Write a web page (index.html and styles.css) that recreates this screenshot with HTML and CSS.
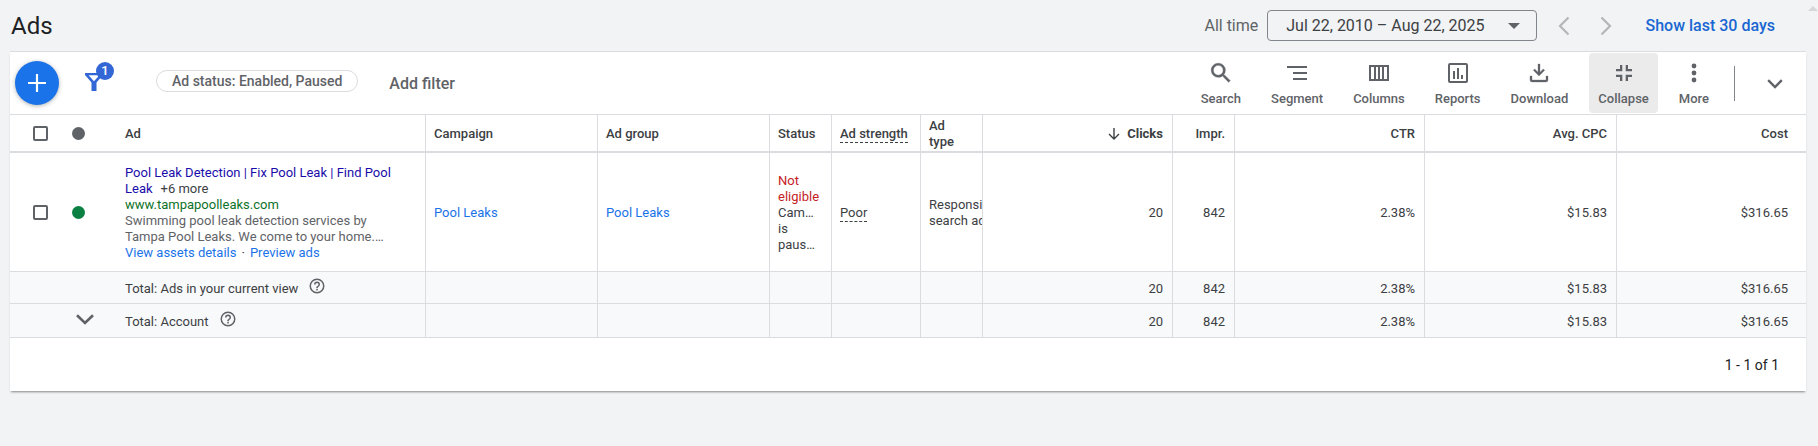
FILE: index.html
```
<!DOCTYPE html>
<html lang="en">
<head>
<meta charset="utf-8">
<meta name="viewport" content="width=device-width, initial-scale=1">
<title>Ads</title>
<link rel="stylesheet" href="styles.css">
</head>
<body>
<header class="topbar">
  <h1 class="title">Ads</h1>
  <div class="range">
    <span class="range-label" id="range-label">All time</span>
    <button class="date-picker" type="button" aria-describedby="range-label">
      <span>Jul 22, 2010 – Aug 22, 2025</span>
      <svg width="12" height="6" viewBox="0 0 12 6"><path d="M0 0h12L6 6z" fill="currentColor"/></svg>
    </button>
    <button class="step" type="button" aria-label="Previous period"><svg width="12" height="20" viewBox="0 0 12 20"><path d="M10.500 1.500L2 10l8.500 8.500" fill="none" stroke="currentColor" stroke-width="2.200"/></svg></button>
    <button class="step" type="button" aria-label="Next period"><svg width="12" height="20" viewBox="0 0 12 20"><path d="M1.500 1.500L10 10l-8.500 8.500" fill="none" stroke="currentColor" stroke-width="2.200"/></svg></button>
    <a class="last-days" href="#">Show last 30 days</a>
  </div>
  <svg class="scroll-up" width="10" height="5" viewBox="0 0 10 5"><path d="M5 0l5 5H0z" fill="currentColor"/></svg>
</header>
<main class="card">
  <div class="toolbar">
    <button class="fab" type="button" aria-label="Create ad"><svg width="20" height="20" viewBox="0 0 20 20"><path d="M10 1v18M1 10h18" stroke="currentColor" stroke-width="2.200"/></svg></button>
    <button class="filter" type="button" aria-label="Filters">
      <svg width="18" height="18" viewBox="0 0 18 18"><path d="M0 0h18v2l-6.500 7.500V18h-5V9.500L0 2zM3.600 2.200L9 8.200l5.400-6z" fill="currentColor" fill-rule="evenodd"/></svg>
      <span class="badge">1</span>
    </button>
    <button class="chip" type="button">Ad status: Enabled, Paused</button>
    <button class="add-filter" type="button">Add filter</button>
    <div class="tools">
      <button class="tool" type="button"><svg viewBox="1 1 22 22"><path d="M15.500 14h-.790l-.280-.270A6.470 6.470 0 0 0 16 9.500 6.500 6.500 0 1 0 9.500 16c1.610 0 3.090-.590 4.230-1.570l.270.280v.790l5 4.990L20.490 19zm-6 0a4.500 4.500 0 1 1 0-9 4.500 4.500 0 0 1 0 9z" stroke="currentColor" stroke-width=".4"/></svg>Search</button>
      <button class="tool" type="button"><svg viewBox="0 0 24 24"><path d="M2 5h20v2H2zM8 11h14v2H8zM8 17h14v2H8z"/></svg>Segment</button>
      <button class="tool" type="button"><svg viewBox="0 0 24 24"><path d="M2 4h20v16H2zM4 6v12h3V6zM9 6v12h2V6zM13 6v12h2V6zM17 6v12h3V6z" fill-rule="evenodd"/></svg>Columns</button>
      <button class="tool" type="button"><svg viewBox="0 0 24 24"><path d="M4 2h16a2 2 0 0 1 2 2v16a2 2 0 0 1-2 2H4a2 2 0 0 1-2-2V4a2 2 0 0 1 2-2zM4 4v16h16V4zM7 10h2v8H7zM11 7h2v11h-2zM15 14h2v4h-2z" fill-rule="evenodd"/></svg>Reports</button>
      <button class="tool" type="button"><svg viewBox="0 0 24 24"><path d="M13 3v8.200l3.300-3.300 1.400 1.400L12 15 6.300 9.300l1.400-1.400 3.300 3.300V3zM3 15h2v4h14v-4h2v4a2 2 0 0 1-2 2H5a2 2 0 0 1-2-2z" stroke="currentColor" stroke-width=".3"/></svg>Download</button>
      <button class="tool tool-active" type="button"><svg viewBox="0 0 24 24"><path d="M8 4h2.300v6.300H4V8h4zM13.700 4H16v4h4v2.300h-6.300zM4 13.700h6.300V20H8v-4H4zM13.700 13.700H20V16h-4v4h-2.300z"/></svg>Collapse</button>
      <button class="tool" type="button"><svg viewBox="0 0 24 24"><circle cx="12" cy="5" r="2.400"/><circle cx="12" cy="12" r="2.400"/><circle cx="12" cy="19" r="2.400"/></svg>More</button>
      <span class="divider"></span>
      <button class="expand" type="button" aria-label="Hide toolbar"><svg width="16" height="10" viewBox="0 0 16 10"><path d="M1.200 1.200L8 8l6.800-6.800" fill="none" stroke="currentColor" stroke-width="2.400"/></svg></button>
    </div>
  </div>
  <table class="grid">
    <colgroup>
      <col class="c-check"><col class="c-dot"><col class="c-ad"><col class="c-campaign"><col class="c-group"><col class="c-status"><col class="c-strength"><col class="c-type"><col class="c-clicks"><col class="c-impr"><col class="c-ctr"><col class="c-cpc"><col class="c-cost">
    </colgroup>
    <thead>
      <tr>
        <th class="bare mark"><input class="box" type="checkbox" aria-label="Select all ads"></th>
        <th class="bare mark"><span class="dot"></span></th>
        <th>Ad</th><th>Campaign</th><th>Ad group</th><th>Status</th>
        <th><span class="hint">Ad strength</span></th>
        <th class="type">Ad type</th>
        <th class="num sorted"><svg width="12" height="12" viewBox="0 0 12 12"><path d="M6 0v11M1 6l5 5 5-5" fill="none" stroke="currentColor" stroke-width="1.400"/></svg>Clicks</th>
        <th class="num">Impr.</th><th class="num">CTR</th><th class="num">Avg. CPC</th><th class="num last">Cost</th>
      </tr>
    </thead>
    <tbody>
      <tr class="ad-row">
        <td class="bare mark"><input class="box" type="checkbox" aria-label="Select ad"></td>
        <td class="bare mark"><span class="dot dot-on"></span></td>
        <td>
          <div class="ad">
            <div><a class="headline" href="#">Pool Leak Detection | Fix Pool Leak | Find Pool Leak</a><span class="more">+6 more</span></div>
            <a class="url" href="#">www.tampapoolleaks.com</a>
            <div class="desc">Swimming pool leak detection services by Tampa Pool Leaks. We come to your home.…</div>
            <div class="actions"><a href="#">View assets details</a><span class="sep">·</span><a href="#">Preview ads</a></div>
          </div>
        </td>
        <td><a href="#">Pool Leaks</a></td>
        <td><a href="#">Pool Leaks</a></td>
        <td class="status"><div class="bad">Not eligible</div><div>Cam…</div><div>is</div><div>paus…</div></td>
        <td><span class="hint">Poor</span></td>
        <td class="clip">Responsive<br>search ad</td>
        <td class="num">20</td><td class="num">842</td><td class="num">2.38%</td><td class="num">$15.83</td><td class="num last">$316.65</td>
      </tr>
      <tr class="total">
        <td class="bare"></td><td class="bare"></td>
        <td><div class="total-label">Total: Ads in your current view <button class="help" type="button" aria-label="Help"><svg viewBox="0 0 24 24"><path d="M11 18h2v-2h-2zM12 2a10 10 0 1 0 0 20 10 10 0 0 0 0-20zm0 18a8 8 0 1 1 0-16 8 8 0 0 1 0 16zm0-14a4 4 0 0 0-4 4h2a2 2 0 1 1 4 0c0 2-3 1.750-3 5h2c0-2.250 3-2.500 3-5a4 4 0 0 0-4-4z"/></svg></button></div></td>
        <td></td><td></td><td></td><td></td><td></td>
        <td class="num">20</td><td class="num">842</td><td class="num">2.38%</td><td class="num">$15.83</td><td class="num last">$316.65</td>
      </tr>
      <tr class="total total-account">
        <td class="bare"></td>
        <td class="bare"><button class="open" type="button" aria-label="Expand account totals"><svg width="18" height="11" viewBox="0 0 18 11"><path d="M1 1.200L9 9l8-7.800" fill="none" stroke="currentColor" stroke-width="2.600"/></svg></button></td>
        <td><div class="total-label">Total: Account <button class="help" type="button" aria-label="Help"><svg viewBox="0 0 24 24"><path d="M11 18h2v-2h-2zM12 2a10 10 0 1 0 0 20 10 10 0 0 0 0-20zm0 18a8 8 0 1 1 0-16 8 8 0 0 1 0 16zm0-14a4 4 0 0 0-4 4h2a2 2 0 1 1 4 0c0 2-3 1.750-3 5h2c0-2.250 3-2.500 3-5a4 4 0 0 0-4-4z"/></svg></button></div></td>
        <td></td><td></td><td></td><td></td><td></td>
        <td class="num">20</td><td class="num">842</td><td class="num">2.38%</td><td class="num">$15.83</td><td class="num last">$316.65</td>
      </tr>
    </tbody>
  </table>
  <footer class="pager">1 - 1 of 1</footer>
</main>
</body>
</html>
```
FILE: styles.css
```
* { box-sizing: border-box; }

body {
  min-height: 100vh;
  margin: 0;
  background: #f1f3f4;
  color: #3c4043;
  font: 13px/16px Roboto, "Liberation Sans", sans-serif;
}

button {
  margin: 0;
  padding: 0;
  border: 0;
  background: none;
  color: inherit;
  font: inherit;
  cursor: pointer;
}

a { color: #1a73e8; text-decoration: none; }
svg { display: block; flex: none; fill: currentColor; }

/* Page heading and date range */
.topbar {
  position: relative;
  display: flex;
  align-items: center;
  justify-content: space-between;
  height: 51px;
  padding: 0 43px 0 11px;
}
.title { margin: 0; color: #202124; font-size: 24px; font-weight: 400; line-height: 32px; }
.range { display: flex; align-items: center; font-size: 16px; line-height: 20px; color: #5f6368; }
.date-picker {
  display: flex;
  align-items: center;
  gap: 24px;
  height: 31px;
  margin: 0 15px 0 9px;
  padding: 0 16px 0 18px;
  border: 1px solid #80868b;
  border-radius: 4px;
  color: #3c4043;
}
.date-picker svg { color: #5f6368; }
.step { padding: 0 6px; margin-right: 18px; color: #b4b7ba; }
.last-days { margin-left: 9px; color: #1967d2; font-weight: 500; }
.scroll-up { position: absolute; top: 6px; right: 0; color: #d5d7d9; }

/* White card */
.card {
  margin: 0 12px 0 10px;
  border-top: 1px solid #dadce0;
  background: #fff;
  box-shadow: 0 2px 2px -1px rgba(60, 64, 67, .6);
}
.toolbar { display: flex; align-items: center; height: 62px; padding: 0 15px 0 5px; color: #5f6368; }
.fab {
  display: grid;
  place-items: center;
  width: 44px;
  height: 44px;
  border-radius: 50%;
  background: #1a73e8;
  color: #fff;
  box-shadow: 0 1px 4px rgba(60, 64, 67, .4);
}
.filter { position: relative; margin-left: 26px; padding-bottom: 2px; color: #3367d6; }
.badge {
  position: absolute;
  top: -11px;
  left: 11px;
  width: 18px;
  border-radius: 9px;
  background: #3367d6;
  color: #fff;
  font-weight: 500;
  line-height: 18px;
  text-align: center;
}
.chip {
  height: 22px;
  margin: 0 31px 4px 53px;
  padding: 0 15px;
  border: 1px solid #dadce0;
  border-radius: 11px;
  font-size: 14px;
  font-weight: 500;
}
.add-filter { padding-top: 2px; font-size: 16px; line-height: 20px; font-weight: 500; }

.tools { display: flex; align-items: center; gap: 12px; margin-left: auto; }
.tool {
  display: flex;
  flex-direction: column;
  align-items: center;
  gap: 6px;
  height: 60px;
  padding: 8px 9px 0;
  border-radius: 4px;
  font-weight: 500;
}
.tool svg { width: 24px; height: 24px; }
.tool-active { background: #ebebeb; }
.divider { width: 1px; height: 35px; margin: 0 12px 0 4px; background: #80868b; }
.expand { padding: 10px 8px 8px; }

/* Ads table */
.grid { width: 100%; table-layout: fixed; border-collapse: separate; border-spacing: 0; }
.c-check { width: 50px; }
.c-dot { width: 57px; }
.c-ad { width: 309px; }
.c-campaign, .c-group { width: 172px; }
.c-status, .c-type, .c-impr { width: 62px; }
.c-strength { width: 89px; }
.c-clicks, .c-ctr { width: 190px; }
.c-cpc { width: 192px; }
.c-cost { width: 189px; }

.grid th, .grid td {
  padding: 2px 8px 0;
  border-right: 1px solid #dadce0;
  border-bottom: 1px solid #dadce0;
  text-align: left;
  vertical-align: middle;
  font-weight: 400;
}
.grid th {
  height: 39px;
  border-top: 1px solid #dadce0;
  border-bottom-width: 2px;
  font-weight: 500;
}
.grid .bare, .grid .last { border-right: 0; }
.grid .num { padding-right: 9px; text-align: right; }
.grid .last { padding-right: 18px; }
.grid .type { padding-right: 24px; }
.grid .sorted { font-weight: 700; }
.sorted svg { display: inline-block; margin-right: 7px; vertical-align: -2px; }
.grid .mark { padding: 0 0 0 23px; }
.grid .mark + .mark { padding-left: 12px; }

.box {
  display: block;
  appearance: none;
  width: 15px;
  height: 15px;
  margin: 0;
  border: 2px solid #5f6368;
  border-radius: 2px;
}
.dot { display: block; width: 13px; height: 13px; border-radius: 50%; background: #5f6368; }
.dot-on { background: #0b8043; }
.hint { border-bottom: 1px dashed #3c4043; padding-bottom: 1px; }

.ad-row td { height: 119px; }
.ad { width: 280px; }
.headline { color: #1a0dab; }
.more { margin-left: 8px; }
.grid .url { color: #0d7228; }
.desc { color: #5f6368; }
.sep { margin: 0 5px; }
.bad { color: #c5221f; }
.grid .clip { padding-right: 0; overflow: hidden; white-space: nowrap; }

.total td { height: 32px; background: #f8f9fa; }
.total-account td { height: 34px; }
.total-label { display: flex; align-items: center; gap: 10px; }
.help { margin-bottom: 6px; color: #5f6368; }
.help svg { width: 18px; height: 18px; }
.open { display: block; margin: 0 0 4px 8px; color: #5f6368; }

.pager { padding: 18px 27px 17px; color: #202124; font-size: 14px; line-height: 18px; text-align: right; }
```
